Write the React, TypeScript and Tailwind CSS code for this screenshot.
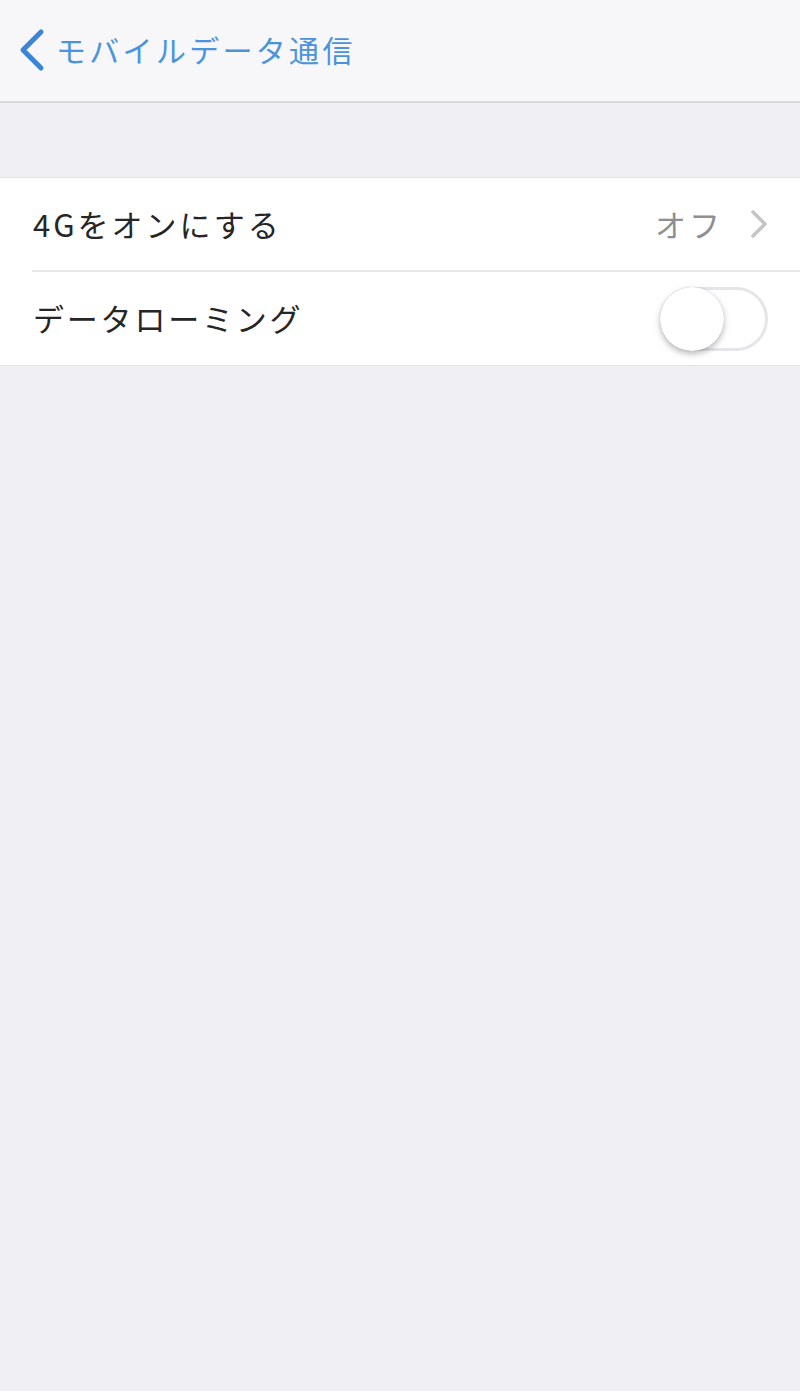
const jp = { fontFamily: '"Noto Sans CJK JP", "Noto Sans", sans-serif' };

function Toggle() {
  return (
    <div className="relative h-[64px] w-[108px] rounded-full border-[3px] border-[#e6e6ea] bg-white">
      <div className="absolute -left-[3px] -top-[3px] h-[64px] w-[64px] rounded-full bg-white shadow-[0_3px_6px_rgba(0,0,0,0.28),0_0_1px_rgba(0,0,0,0.2)]" />
    </div>
  );
}

export default function App() {
  return (
    <div className="flex min-h-[1391px] flex-col bg-[#efeff4]" style={jp}>
      <header className="flex h-[103px] items-center border-b-2 border-[#d9d9dd] bg-[#f7f7f9] pl-[18px]">
        <svg width="28" height="44" viewBox="0 0 28 44" className="mr-[10px] -mt-[2px]">
          <path d="M23 4 L5 22 L23 40" fill="none" stroke="#3a85d8" strokeWidth="5" strokeLinecap="round" strokeLinejoin="round" />
        </svg>
        <span className="-mt-[2px] text-[30px] tracking-[3.3px] text-[#4b94dd]">モバイルデータ通信</span>
      </header>

      <div className="mt-[74px] border-y border-[#e3e3e7] bg-white">
        <div className="flex h-[92px] items-center justify-between pl-[33px] pr-[32px]">
          <span className="text-[31px] tracking-[3px] text-[#262626]">4Gをオンにする</span>
          <div className="flex items-center gap-[27px]">
            <span className="text-[31px] tracking-[3px] text-[#8e8e93]">オフ</span>
            <svg width="18" height="30" viewBox="0 0 18 30">
              <path d="M3 3 L15 15 L3 27" fill="none" stroke="#c4c4c9" strokeWidth="3.5" strokeLinecap="round" strokeLinejoin="round" />
            </svg>
          </div>
        </div>
        <div className="ml-[32px] h-[2px] bg-[#e8e8ec]" />
        <div className="flex h-[93px] items-center justify-between pl-[33px] pr-[32px]">
          <span className="text-[31px] tracking-[2.8px] text-[#262626]">データローミング</span>
          <Toggle />
        </div>
      </div>
    </div>
  );
}
